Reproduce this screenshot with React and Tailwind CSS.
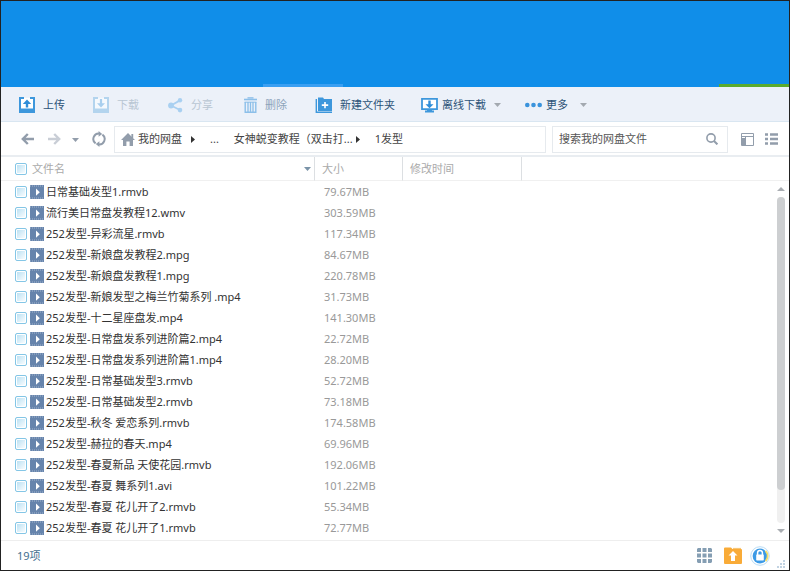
import React, { useState } from 'react';

const files = [
    { name: '日常基础发型1.rmvb', size: '79.67MB' },
    { name: '流行美日常盘发教程12.wmv', size: '303.59MB' },
    { name: '252发型-异彩流星.rmvb', size: '117.34MB' },
    { name: '252发型-新娘盘发教程2.mpg', size: '84.67MB' },
    { name: '252发型-新娘盘发教程1.mpg', size: '220.78MB' },
    { name: '252发型-新娘发型之梅兰竹菊系列 .mp4', size: '31.73MB' },
    { name: '252发型-十二星座盘发.mp4', size: '141.30MB' },
    { name: '252发型-日常盘发系列进阶篇2.mp4', size: '22.72MB' },
    { name: '252发型-日常盘发系列进阶篇1.mp4', size: '28.20MB' },
    { name: '252发型-日常基础发型3.rmvb', size: '52.72MB' },
    { name: '252发型-日常基础发型2.rmvb', size: '73.18MB' },
    { name: '252发型-秋冬 爱恋系列.rmvb', size: '174.58MB' },
    { name: '252发型-赫拉的春天.mp4', size: '69.96MB' },
    { name: '252发型-春夏新品 天使花园.rmvb', size: '192.06MB' },
    { name: '252发型-春夏 舞系列1.avi', size: '101.22MB' },
    { name: '252发型-春夏 花儿开了2.rmvb', size: '55.34MB' },
    { name: '252发型-春夏 花儿开了1.rmvb', size: '72.77MB' },
];

const UploadIcon = () => (
    <svg width="16" height="16" viewBox="0 0 16 16" fill="none">
        <path d="M1 0.8H15V12H1Z" fill="#fff" />
        <path d="M5 1H1V12M11 1H15V12" stroke="#3d97dc" strokeWidth="2" />
        <path d="M0 11.5H16V16H0Z" fill="#3d97dc" />
        <path d="M8 2.4L12.2 7H9.2V10.6H6.8V7H3.8Z" fill="#2f8dd8" />
    </svg>
);

const DownloadIcon = () => (
    <svg width="16" height="16" viewBox="0 0 16 16" fill="none">
        <path d="M1 0.8H15V12H1Z" fill="#f5f9fd" />
        <path d="M5 1H1V12M11 1H15V12" stroke="#b3d4ee" strokeWidth="2" />
        <path d="M0 11.5H16V16H0Z" fill="#b3d4ee" />
        <path d="M8 10.4L4 6.2H6.9V2H9.1V6.2H12Z" fill="#a9cfee" />
    </svg>
);

const ShareIcon = () => (
    <svg width="16" height="16" viewBox="0 0 16 16" fill="#a9d0f1">
        <path d="M4 8.5L13 3.4M4 8.5L13 13" stroke="#a9d0f1" strokeWidth="1.8" />
        <circle cx="4" cy="8.5" r="2.9" />
        <circle cx="13" cy="3.3" r="2.2" />
        <circle cx="13" cy="13.1" r="2.3" />
    </svg>
);

const TrashIcon = () => (
    <svg width="16" height="16" viewBox="0 0 16 16" fill="none" stroke="#8cbfe9">
        <path d="M3 2.5H16" strokeWidth="1.6" />
        <path d="M6.5 0.9H12.5" strokeWidth="1.4" />
        <path d="M4.2 5V15.2H14.8V5" strokeWidth="1.4" />
        <path d="M3.6 5.2H15.4" strokeWidth="1" />
        <path d="M7 5V15M9.5 5V15M12 5V15" strokeWidth="1.3" />
    </svg>
);

const NewFolderIcon = () => (
    <svg width="17" height="16" viewBox="0 0 17 16">
        <path d="M1.3 2V15.3H17" fill="none" stroke="#3d97dc" strokeWidth="1.4" />
        <path d="M3 0.5H8L9 2H17V14H3Z" fill="#3d97dc" />
        <path d="M10 4.9V11.3M6.8 8.1H13.2" stroke="#fff" strokeWidth="1.6" />
    </svg>
);

const OfflineIcon = () => (
    <svg width="17" height="16" viewBox="0 0 17 16">
        <path d="M1 1.8H16V12.2H1Z" fill="#fff" stroke="#3d97dc" strokeWidth="1.8" />
        <path d="M8.5 11.2L4.5 7.2H7.3V3.4H9.7V7.2H12.5Z" fill="#2f8dd8" />
        <path d="M6 12H11V13.6H13V15.4H4V13.6H6Z" fill="#3d97dc" />
    </svg>
);

const MoreIcon = () => (
    <svg width="17" height="16" viewBox="0 0 17 16" fill="#3a93dc">
        <circle cx="2.3" cy="8" r="2.3" />
        <circle cx="8.5" cy="8" r="2.3" />
        <circle cx="14.7" cy="8" r="2.3" />
    </svg>
);

const Caret = ({ color }) => (
    <svg width="7" height="4" viewBox="0 0 7 4" fill={color}>
        <path d="M0 0H7L3.5 4Z" />
    </svg>
);

const Crumb = () => (
    <svg width="4" height="7" viewBox="0 0 4 7" fill="#333">
        <path d="M0 0L4 3.5L0 7Z" />
    </svg>
);

const VideoIcon = () => (
    <svg width="14" height="14" viewBox="0 0 14 14">
        <path d="M0 0H14V14H0Z" fill="#6684ac" />
        <path d="M0 1H14M0 13H14" stroke="#a3b5ce" strokeWidth="1" strokeDasharray="1 1" />
        <path d="M6 3.6L9.8 7.2L6 10.8Z" fill="#fff" />
    </svg>
);

const Checkbox = (props) => (
    <input
        type="checkbox"
        className="block size-3 shrink-0 appearance-none rounded-[2px] border border-[#84c6e6] bg-linear-to-br from-[#b4def2] to-white ring-1 ring-white ring-inset checked:from-[#4aa8e0]"
        {...props}
    />
);

const ToolButton = ({ icon, label, tone }) => (
    <button type="button" className="flex h-6 items-center gap-2">
        {icon}
        <span className={tone}>{label}</span>
    </button>
);

const App = () => {
    const [selected, setSelected] = useState([]);
    const [query, setQuery] = useState('搜索我的网盘文件');

    const toggle = (name) => {
        setSelected(selected.includes(name) ? selected.filter((n) => n !== name) : [...selected, name]);
    };

    const toggleAll = () => {
        setSelected(selected.length === files.length ? [] : files.map((f) => f.name));
    };

    return (
        <div className="flex min-h-screen flex-col border border-[#222] bg-white font-['Noto_Sans','Noto_Sans_CJK_SC',sans-serif] text-[11px] leading-4 text-[#333]">
            <header className="flex h-[86px] items-end bg-[#108ee9]">
                <div className="ml-[262px] h-[3px] w-20 bg-[#3a9ff2]"></div>
                <div className="ml-auto h-[3px] w-[70px] bg-[#5bab2d]"></div>
            </header>

            <div className="flex h-[35px] items-center border-b border-[#d9e6f1] bg-[#ecf1f9] pt-px pl-[18px]">
                <div className="flex gap-7">
                    <ToolButton icon={<UploadIcon />} label="上传" tone="text-[#2d5478]" />
                    <ToolButton icon={<DownloadIcon />} label="下载" tone="text-[#b9c6d3]" />
                    <ToolButton icon={<ShareIcon />} label="分享" tone="text-[#b9c6d3]" />
                    <ToolButton icon={<TrashIcon />} label="删除" tone="text-[#8da4ba]" />
                    <ToolButton icon={<NewFolderIcon />} label="新建文件夹" tone="text-[#2d5478]" />
                </div>
                <div className="ml-[26px] flex gap-6 text-[#2d5478]">
                    <button type="button" className="flex h-6 items-center gap-1">
                        <OfflineIcon />
                        <span className="mr-1">离线下载</span>
                        <Caret color="#a3a9b0" />
                    </button>
                    <button type="button" className="flex h-6 items-center gap-1">
                        <MoreIcon />
                        <span className="mr-2">更多</span>
                        <Caret color="#a3a9b0" />
                    </button>
                </div>
            </div>

            <div className="flex h-[35px] items-center border-b-2 border-[#e9edf1] pt-px pr-[11px] pl-5">
                <button type="button" aria-label="后退">
                    <svg width="13" height="12" viewBox="0 0 13 12" fill="none" stroke="#929dab" strokeWidth="2.4">
                        <path d="M13 6H2M6.8 1L1.8 6L6.8 11" />
                    </svg>
                </button>
                <button type="button" aria-label="前进" className="ml-[14px]">
                    <svg width="13" height="12" viewBox="0 0 13 12" fill="none" stroke="#c9ced6" strokeWidth="2.4">
                        <path d="M0 6H11M6.2 1L11.2 6L6.2 11" />
                    </svg>
                </button>
                <button type="button" aria-label="历史记录" className="mt-[2px] ml-[11px]">
                    <Caret color="#929dab" />
                </button>
                <button type="button" aria-label="刷新" className="ml-[13px]">
                    <svg width="14" height="16" viewBox="0 0 14 16" fill="none" stroke="#929dab" strokeWidth="2">
                        <path d="M3.6 12.4A5.4 5.4 0 0 1 7.6 2.7M10.4 3.6A5.4 5.4 0 0 1 6.4 13.3" />
                        <path d="M6.6 0L10.2 2.9L6.6 5.8ZM7.4 10.2L3.8 13.1L7.4 16Z" fill="#929dab" stroke="none" />
                    </svg>
                </button>

                <nav className="ml-2 flex h-[27px] min-w-0 flex-1 items-center border border-[#e6eaee] pl-[6px] text-[#444]">
                    <svg width="14" height="13" viewBox="0 0 14 13" fill="#929dab">
                        <path d="M7 0L14 7H12V13H8.6V8.6H5.4V13H2V7H0Z" />
                        <path d="M10.4 1H12.2V5H10.4Z" />
                    </svg>
                    <a href="#root" className="mr-[9px] ml-[3px]">我的网盘</a>
                    <Crumb />
                    <a href="#up" className="mx-[15px]">...</a>
                    <a href="#course" className="mr-[3px]">女神蜕变教程（双击打...</a>
                    <Crumb />
                    <a href="#current" className="ml-[15px]">1发型</a>
                </nav>

                <div className="ml-[6px] flex h-[27px] w-44 items-center border border-[#e6eaee] pr-[9px] pl-[6px]">
                    <input
                        type="text"
                        aria-label="搜索我的网盘文件"
                        value={query}
                        onChange={(e) => setQuery(e.target.value)}
                        className="min-w-0 flex-1 text-[#555] outline-none"
                    />
                    <button type="button" aria-label="搜索">
                        <svg width="12" height="12" viewBox="0 0 12 12" fill="none" stroke="#929dab" strokeWidth="1.6">
                            <circle cx="5" cy="5" r="4.1" />
                            <path d="M8 8L11.4 11.4" strokeWidth="2" />
                        </svg>
                    </button>
                </div>

                <button type="button" aria-label="缩略图" className="ml-[13px]">
                    <svg width="13" height="13" viewBox="0 0 13 13">
                        <path d="M0.5 0.5H12.5V12.5H0.5Z" fill="none" stroke="#929dab" />
                        <path d="M0 3.5H13" stroke="#929dab" />
                        <path d="M1 5H4V12H1Z" fill="#929dab" />
                        <path d="M4.5 4V12.5" stroke="#929dab" />
                    </svg>
                </button>
                <button type="button" aria-label="列表" className="ml-[11px]">
                    <svg width="13" height="12" viewBox="0 0 13 12" stroke="#929dab" strokeWidth="2.6">
                        <path d="M0 1.5H3M0 6H3M0 10.5H3M5 1.5H13M5 6H13M5 10.5H13" />
                    </svg>
                </button>
            </div>

            <main className="flex flex-1">
                <div className="min-w-0 flex-1">
                    <table className="w-full table-fixed border-separate border-spacing-0 text-left">
                        <colgroup>
                            <col className="w-[314px]" />
                            <col className="w-[88px]" />
                            <col className="w-[119px]" />
                            <col />
                        </colgroup>
                        <thead className="text-[#aaa]">
                            <tr className="h-6">
                                <th className="border-r border-b border-[#dcdfe2] border-b-[#f0f0f0] p-0 font-normal">
                                    <div className="flex items-center pr-[3px] pl-[14px]">
                                        <Checkbox
                                            aria-label="全选"
                                            checked={selected.length === files.length}
                                            onChange={toggleAll}
                                        />
                                        <span className="ml-[5px] flex-1">文件名</span>
                                        <Caret color="#7a93a8" />
                                    </div>
                                </th>
                                <th className="border-r border-b border-[#dcdfe2] border-b-[#f0f0f0] p-0 pl-[7px] font-normal">大小</th>
                                <th className="border-r border-b border-[#dcdfe2] border-b-[#f0f0f0] p-0 pl-[7px] font-normal">修改时间</th>
                                <td className="border-b border-[#f0f0f0] p-0"></td>
                            </tr>
                        </thead>
                        <tbody>
                            {files.map((file, index) => (
                                <tr key={file.name} className="h-[21px]">
                                    <td className="p-0">
                                        <div className="flex items-center pl-[14px]">
                                            <Checkbox
                                                id={`file-${index}`}
                                                checked={selected.includes(file.name)}
                                                onChange={() => toggle(file.name)}
                                            />
                                            <label htmlFor={`file-${index}`} className="ml-[3px] flex items-center gap-[2px] whitespace-pre">
                                                <VideoIcon />
                                                {file.name}
                                            </label>
                                        </div>
                                    </td>
                                    <td className="p-0 pl-[9px] text-[#999]">{file.size}</td>
                                    <td className="p-0"></td>
                                    <td className="p-0"></td>
                                </tr>
                            ))}
                        </tbody>
                    </table>
                </div>

                <div className="flex w-[14px] flex-col">
                    <div className="h-6 shrink-0 border-b border-[#f0f0f0]"></div>
                    <div className="flex flex-1 flex-col items-center pt-[6px] pr-[2px] pb-[7px]">
                        <svg width="8" height="4" viewBox="0 0 8 4" fill="#a9adb2">
                            <path d="M4 0L8 4H0Z" />
                        </svg>
                        <div className="my-[6px] w-2 flex-1 rounded-full bg-[#f0f0f0]">
                            <div className="h-9/10 rounded-full bg-[#cdcfd1]"></div>
                        </div>
                        <svg width="8" height="4" viewBox="0 0 8 4" fill="#a9adb2">
                            <path d="M0 0H8L4 4Z" />
                        </svg>
                    </div>
                </div>
            </main>

            <footer className="flex h-[30px] items-center border-t border-[#eee] pr-[3px] pl-4 text-[#44708f]">
                <span className="flex-1">19项</span>
                <button type="button" aria-label="应用">
                    <svg width="15" height="15" viewBox="0 0 15 15" fill="#859eb3">
                        <path d="M1 0H4V4H0V1ZM5.5 0H9.5V4H5.5ZM11 0H14L15 1V4H11ZM0 5.5H4V9.5H0ZM5.5 5.5H9.5V9.5H5.5ZM11 5.5H15V9.5H11ZM0 11H4V15H1L0 14ZM5.5 11H9.5V15H5.5ZM11 11H15V14L14 15H11Z" />
                    </svg>
                </button>
                <button type="button" aria-label="传输列表" className="ml-3">
                    <svg width="18" height="17" viewBox="0 0 18 17">
                        <path d="M1 0.5H7L8.5 2H17A1 1 0 0 1 18 3V16A1 1 0 0 1 17 17H1A1 1 0 0 1 0 16V1.5A1 1 0 0 1 1 0.5Z" fill="#f9ab38" />
                        <path d="M9 1.4H17" stroke="#f7c069" />
                        <path d="M9 4L13.5 8.6H11V14H7V8.6H4.5Z" fill="#fff" />
                    </svg>
                </button>
                <button type="button" aria-label="隐藏空间" className="ml-2">
                    <svg width="20" height="20" viewBox="0 0 20 20">
                        <circle cx="10" cy="10" r="9.3" fill="#fff" stroke="#b9dcf5" />
                        <circle cx="10" cy="10" r="7.4" fill="#3b9ae6" />
                        <path d="M15.6 4.8A7.6 7.6 0 0 1 15.6 15.2" fill="none" stroke="#f3dd6a" strokeWidth="1.8" />
                        <path d="M7.6 9V6.8A2.4 2.4 0 0 1 12.4 6.8V9" fill="none" stroke="#fff" strokeWidth="1.5" />
                        <rect x="6.2" y="8.4" width="7.6" height="6" rx="0.6" fill="#fff" />
                    </svg>
                </button>
                <svg width="10" height="10" viewBox="0 0 10 10" fill="#c2d3e2" className="ml-[6px] self-end">
                    <path d="M7 0H9V2H7ZM7 3H9V5H7ZM7 6H9V8H7ZM4 3H6V5H4ZM4 6H6V8H4ZM1 6H3V8H1Z" />
                </svg>
            </footer>
        </div>
    );
};

export default App;
